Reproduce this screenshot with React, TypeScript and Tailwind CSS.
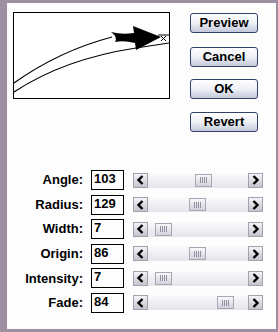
const rows = [
  { label: 'Angle:', value: '103', pos: 195 },
  { label: 'Radius:', value: '129', pos: 189 },
  { label: 'Width:', value: '7', pos: 155 },
  { label: 'Origin:', value: '86', pos: 189 },
  { label: 'Intensity:', value: '7', pos: 155 },
  { label: 'Fade:', value: '84', pos: 217 },
]

function PreviewArt() {
  return (
    <svg width="155" height="85" viewBox="0 0 155 85" className="block">
      <path d="M0 70 Q 45 38 98 24" fill="none" stroke="#000" strokeWidth="1.2" />
      <path d="M0 79 Q 50 46 122 35 L 155 30" fill="none" stroke="#000" strokeWidth="1.2" />
      <path d="M97 19 Q 108 22 120 20 L 119 13 L 147 24 L 122 37 L 121 30 Q 110 27 101 29 Q 104 24 97 19 Z" fill="#000" />
      <path d="M144 22 L 155 22" stroke="#000" strokeWidth="1" />
      <path d="M147 23 L 152 28 M 152 23 L 147 28" stroke="#000" strokeWidth="1" />
    </svg>
  )
}

function Chevron({ dir }: { dir: 'left' | 'right' }) {
  return (
    <svg width="9" height="10" viewBox="0 0 9 10">
      <path
        d={dir === 'left' ? 'M6.5 1 L2.5 5 L6.5 9' : 'M2.5 1 L6.5 5 L2.5 9'}
        fill="none"
        stroke="#000"
        strokeWidth="2.4"
      />
    </svg>
  )
}

function ArrowButton({ dir }: { dir: 'left' | 'right' }) {
  return (
    <div className="flex h-[15px] w-[15px] items-center justify-center border border-[#a2a2ac] bg-gradient-to-b from-[#f4f4f8] to-[#c4c4ce]">
      <Chevron dir={dir} />
    </div>
  )
}

function Scrollbar({ pos }: { pos: number }) {
  // pos is the thumb's left edge in page pixels; track starts at 148
  return (
    <div className="flex h-[15px] w-[130px] items-center">
      <ArrowButton dir="left" />
      <div className="relative h-[15px] flex-1 bg-gradient-to-b from-[#fbfbfd] to-[#e4e4ea]">
        <div
          className="absolute top-[1px] flex h-[13px] w-[17px] items-center justify-center border border-[#a8a8b4] bg-gradient-to-b from-[#f8f8fb] to-[#d2d2dc]"
          style={{ left: pos - 148 }}
        >
          <svg width="7" height="6" viewBox="0 0 7 6">
            <path d="M0.5 0 V6 M2.5 0 V6 M4.5 0 V6 M6.5 0 V6" stroke="#9090a0" strokeWidth="1" />
          </svg>
        </div>
      </div>
      <ArrowButton dir="right" />
    </div>
  )
}

function DialogButton({ children }: { children: string }) {
  return (
    <button className="flex h-[20px] w-[68px] items-center justify-center rounded-[3px] border border-[#34426a] bg-gradient-to-b from-[#ffffff] via-[#eef0f6] to-[#c3c9da] text-[13px] font-bold text-black">
      {children}
    </button>
  )
}

export default function App() {
  return (
    <div
      className="h-[332px] w-[278px] bg-[#9d8ea1] pb-[3px] pl-[7px] pr-[2px] pt-[3px]"
      style={{ fontFamily: '"Liberation Sans", Arial, sans-serif' }}
    >
      <div className="flex h-full flex-col bg-[#fdfdfd]">
        <div className="flex">
          <div className="ml-[6px] mt-[9px] h-[85px] w-[155px] box-content border border-black bg-white">
            <PreviewArt />
          </div>
          <div className="ml-[20px] mt-[10px] flex flex-col">
            <DialogButton>Preview</DialogButton>
            <div className="mt-[14px]">
              <DialogButton>Cancel</DialogButton>
            </div>
            <div className="mt-[12px]">
              <DialogButton>OK</DialogButton>
            </div>
            <div className="mt-[13px]">
              <DialogButton>Revert</DialogButton>
            </div>
          </div>
        </div>
        <div className="mt-[38px] flex flex-col gap-[4.6px]">
          {rows.map((r) => (
            <div key={r.label} className="flex h-[20px] items-center">
              <div className="w-[78px] pr-[2px] text-right text-[13px] font-bold text-black">
                {r.label}
              </div>
              <div className="ml-[6px] h-[20px] w-[33px] border border-black px-[2px] text-[13px] font-bold leading-[16px] text-black">
                {r.value}
              </div>
              <div className="ml-[9px]">
                <Scrollbar pos={r.pos} />
              </div>
            </div>
          ))}
        </div>
      </div>
    </div>
  )
}
